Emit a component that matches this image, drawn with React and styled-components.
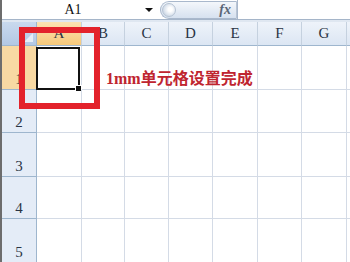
import React from "react";
import styled, { createGlobalStyle } from "styled-components";

const GlobalStyle = createGlobalStyle`
  html, body { margin: 0; padding: 0; background: #ffffff; }
  body { width: 350px; height: 262px; overflow: hidden; }
`;

const Page = styled.div`
  position: relative;
  width: 350px;
  height: 262px;
  overflow: hidden;
  background: #ffffff;
  border-left: 2px solid #6d6d6d;
  box-sizing: border-box;
`;

const FormulaBar = styled.div`
  display: flex;
  align-items: stretch;
  height: 19px;
  border-bottom: 1px solid #a5b5c9;
  background: #ffffff;
`;

const NameBox = styled.div`
  position: relative;
  display: flex;
  align-items: center;
  justify-content: center;
  width: 156px;
  padding-right: 14px;
  box-sizing: border-box;
  font-family: "Liberation Serif", serif;
  font-size: 14px;
  color: #111;
`;

const Arrow = styled.span`
  position: absolute;
  right: 5px;
  top: 8px;
  width: 0;
  height: 0;
  border-left: 4px solid transparent;
  border-right: 4px solid transparent;
  border-top: 4px solid #111;
`;

const Pill = styled.div`
  display: flex;
  align-items: center;
  justify-content: flex-end;
  width: 77px;
  margin: 1px 0 0 2px;
  padding-right: 5px;
  box-sizing: border-box;
  border-radius: 9px 0 0 9px;
  border: 1px solid #a9b8cc;
  border-right: 1px solid #b8c4d4;
  background: linear-gradient(#f4f7fb, #d6e1ef);
  position: relative;
`;

const Knob = styled.span`
  position: absolute;
  left: 1px;
  top: 1px;
  width: 14px;
  height: 14px;
  border-radius: 50%;
  background: radial-gradient(circle at 60% 45%, #ffffff 20%, #cdd8e6 75%);
  border: 1px solid #b6c3d3;
  box-sizing: border-box;
`;

const Fx = styled.span`
  font-family: "Liberation Serif", serif;
  font-style: italic;
  font-weight: bold;
  font-size: 14px;
  color: #5a6677;
`;

const FormulaInput = styled.div`
  flex: 1;
  border-left: 1px solid #a9b8cc;
`;

const Gap = styled.div`
  height: 2px;
  background: #dfe7f1;
`;

const Sheet = styled.div`
  display: grid;
  grid-template-columns: 35px 45px 43px 44px 44px 45px 44px 45px 44px;
  grid-template-rows: 24px 44px 43px 44px 42px 44px;
`;

const Corner = styled.div`
  position: relative;
  background: linear-gradient(#c9d9ee, #b3c8e4);
  border-right: 1px solid #9eb6ce;
  border-bottom: 1px solid #9eb6ce;
  box-sizing: border-box;
  &::after {
    content: "";
    position: absolute;
    right: 3px;
    bottom: 3px;
    border-left: 9px solid transparent;
    border-bottom: 9px solid #e6edf6;
  }
`;

const ColHead = styled.div`
  display: flex;
  align-items: center;
  justify-content: center;
  box-sizing: border-box;
  border-right: 1px solid #c5d1df;
  border-bottom: 1px solid #9eb6ce;
  background: ${(p) =>
    p.$active
      ? "linear-gradient(#fbe3b3, #f7c97b)"
      : "linear-gradient(#eef3fa, #dce6f3)"};
  font-family: "Liberation Serif", serif;
  font-size: 15px;
  color: #2a3444;
`;

const RowHead = styled.div`
  display: flex;
  align-items: flex-end;
  justify-content: center;
  padding-bottom: 1px;
  box-sizing: border-box;
  border-right: 1px solid #9eb6ce;
  border-bottom: 1px solid #9eb6ce;
  background: ${(p) => (p.$active ? "#f8d9a3" : "#e4ecf7")};
  font-family: "Liberation Serif", serif;
  font-size: 15px;
  color: #2a3444;
`;

const Cell = styled.div`
  box-sizing: border-box;
  border-right: 1px solid #d4dbe6;
  border-bottom: 1px solid #d4dbe6;
  position: relative;
`;

const Selected = styled.div`
  position: absolute;
  left: -1px;
  top: 1px;
  right: 1px;
  bottom: -1px;
  border: 2px solid #111;
  background: #fff;
  &::after {
    content: "";
    position: absolute;
    right: -4px;
    bottom: -4px;
    width: 5px;
    height: 5px;
    background: #111;
    border: 1px solid #fff;
  }
`;

const Highlight = styled.div`
  position: absolute;
  left: 17px;
  top: 27px;
  width: 81px;
  height: 82px;
  border: 6px solid #e3222b;
  box-sizing: border-box;
  pointer-events: none;
`;

const Note = styled.div`
  position: absolute;
  left: 104px;
  top: 65px;
  font-family: "Liberation Serif", "Noto Sans CJK SC", serif;
  font-weight: bold;
  font-size: 16px;
  color: #bf2530;
  white-space: nowrap;
`;

const cols = ["A", "B", "C", "D", "E", "F", "G", ""];
const rows = [1, 2, 3, 4, 5];

export default function App() {
  return (
    <>
      <GlobalStyle />
      <Page>
        <FormulaBar>
          <NameBox>
            A1
            <Arrow />
          </NameBox>
          <Pill>
            <Knob />
            <Fx>fx</Fx>
          </Pill>
          <FormulaInput />
        </FormulaBar>
        <Gap />
        <Sheet>
          <Corner />
          {cols.map((c, i) => (
            <ColHead key={i} $active={c === "A"}>
              {c}
            </ColHead>
          ))}
          {rows.map((r) => (
            <React.Fragment key={r}>
              <RowHead $active={r === 1}>{r}</RowHead>
              {cols.map((c, i) => (
                <Cell key={i}>{r === 1 && c === "A" && <Selected />}</Cell>
              ))}
            </React.Fragment>
          ))}
        </Sheet>
        <Highlight />
        <Note>1mm单元格设置完成</Note>
      </Page>
    </>
  );
}
